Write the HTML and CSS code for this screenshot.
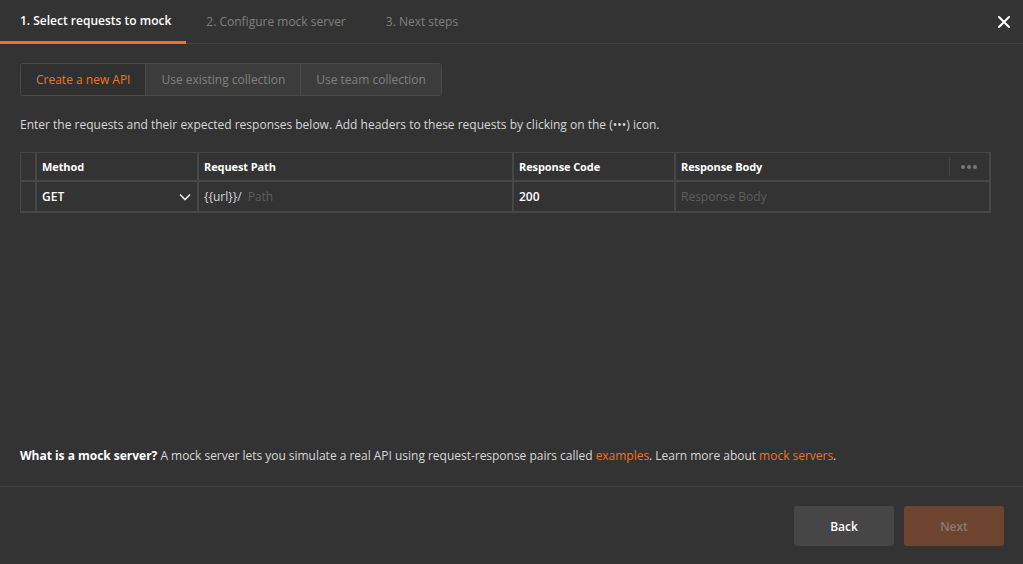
FILE: index.html
```html
<!DOCTYPE html>
<html>
<head>
<meta charset="utf-8">
<link rel="stylesheet" href="styles.css">
</head>
<body>
<div class="modal">
  <div class="tabs">
    <div class="tab active">1. Select requests to mock</div>
    <div class="tab">2. Configure mock server</div>
    <div class="tab">3. Next steps</div>
    <div class="close">
      <svg width="12" height="12" viewBox="0 0 12 12"><path d="M1 1 L11 11 M11 1 L1 11" stroke="#fff" stroke-width="2" stroke-linecap="square"/></svg>
    </div>
  </div>
  <div class="content">
    <div class="segmented">
      <div class="seg seg-active">Create a new API</div>
      <div class="seg">Use existing collection</div>
      <div class="seg">Use team collection</div>
    </div>
    <p class="desc">Enter the requests and their expected responses below. Add headers to these requests by clicking on the (&bull;&bull;&bull;) icon.</p>
    <div class="table">
      <div class="row head">
        <div class="cell c0"></div>
        <div class="cell c1">Method</div>
        <div class="cell c2">Request Path</div>
        <div class="cell c3">Response Code</div>
        <div class="cell c4">Response Body</div>
        <div class="cell c5"><span class="dots"><i></i><i></i><i></i></span></div>
      </div>
      <div class="row body">
        <div class="cell c0"></div>
        <div class="cell c1 method">GET
          <svg class="chev" width="12" height="8" viewBox="0 0 12 8"><path d="M1 1.5 L6 6.5 L11 1.5" stroke="#e6e6e6" stroke-width="1.6" fill="none"/></svg>
        </div>
        <div class="cell c2"><span class="url">{{url}}/</span><span class="ph">Path</span></div>
        <div class="cell c3 code">200</div>
        <div class="cell c4 ph">Response Body</div>
        <div class="cell c5 noborder"></div>
      </div>
    </div>
    <div class="spacer"></div>
    <p class="info"><b>What is a mock server?</b> A mock server lets you simulate a real API using request-response pairs called <a>examples</a>. Learn more about <a>mock servers</a>.</p>
  </div>
  <div class="footer">
    <button class="btn back">Back</button>
    <button class="btn next">Next</button>
  </div>
</div>
</body>
</html>
```
FILE: styles.css
```css
* { box-sizing: border-box; }
html, body { margin: 0; padding: 0; }
body {
  background: #333333;
  font-family: "Open Sans", "Noto Sans", sans-serif;
  color: #d4d4d4;
  width: 1023px;
  height: 564px;
  overflow: hidden;
}
.modal { display: flex; flex-direction: column; height: 564px; }
.tabs {
  display: flex;
  align-items: stretch;
  height: 44px;
  border-bottom: 1px solid #444444;
}
.tab {
  font-size: 12px;
  color: #808080;
  padding: 0 20px;
  display: flex;
  align-items: center;
  height: 43px;
}
.tab.active {
  color: #ffffff;
  font-weight: 600;
  border-bottom: 3px solid #f47023;
  padding-right: 15px;
  height: 44px;
  margin-bottom: -1px;
}
.close {
  margin-left: auto;
  width: 38px;
  display: flex;
  align-items: center;
  justify-content: center;
}
.content {
  flex: 1;
  padding: 19px 20px 0 20px;
  display: flex;
  flex-direction: column;
  border-bottom: 1px solid #444444;
}
.segmented {
  display: flex;
  align-self: flex-start;
  border: 1px solid #4a4a4a;
  border-radius: 3px;
  overflow: hidden;
  height: 33px;
}
.seg {
  font-size: 12px;
  color: #808080;
  background: #3c3c3c;
  padding: 0 15px;
  display: flex;
  align-items: center;
  border-left: 1px solid #4a4a4a;
}
.seg.seg-active {
  background: #303030;
  color: #f47023;
  border-left: none;
}
.desc {
  margin: 21px 0 0 0;
  font-size: 12px;
  color: #d8d8d8;
  line-height: 16px;
}
.table {
  margin-top: 19px;
  width: 971px;
  border: 1px solid #474747;
  border-bottom-width: 2px;
  border-right-width: 2px;
}
.row { display: flex; }
.row.head { height: 29px; border-bottom: 2px solid #474747; }
.row.body { height: 29px; }
.cell {
  display: flex;
  align-items: center;
  padding: 0 5px;
  font-size: 11px;
  border-right: 2px solid #474747;
}
.head .cell { color: #ffffff; font-weight: 700; letter-spacing: -0.1px; }
.c0 { width: 16px; padding: 0; }
.c1 { width: 162px; }
.c2 { width: 315px; }
.c3 { width: 162px; }
.c4 { width: 273px; }
.c5 { flex: 1; border-right: none; justify-content: center; }
.head .c4 { border-right: none; }
.head .c5 { position: relative; }
.head .c5::before {
  content: "";
  position: absolute;
  left: 0;
  top: 4px;
  bottom: 4px;
  width: 1px;
  background: #474747;
}
.dots { display: flex; gap: 2px; }
.dots i { width: 4px; height: 4px; border-radius: 50%; background: #7a7a7a; display: block; }
.body .cell { font-size: 12px; }
.method { color: #ffffff; font-weight: 600; justify-content: space-between; padding-right: 6px; }
.code { color: #ffffff; font-weight: 600; }
.url { color: #d8d8d8; margin-right: 6px; }
.ph { color: #5e5e5e; }
.body .c4 { border-right: none; }
.spacer { flex: 1; }
.info {
  margin: 0 0 22px 0;
  font-size: 12px;
  color: #d8d8d8;
  line-height: 16px;
  letter-spacing: -0.02px;
}
.info b { color: #ffffff; font-weight: 700; }
.info a { color: #f47023; }
.footer {
  height: 77px;
  display: flex;
  justify-content: flex-end;
  align-items: flex-start;
  gap: 10px;
  padding: 19px 19px 0 0;
}
.btn {
  width: 100px;
  height: 40px;
  border: none;
  border-radius: 3px;
  font-family: "Open Sans", "Noto Sans", sans-serif;
  font-size: 12px;
  font-weight: 600;
}
.back { background: #464646; color: #ffffff; }
.next { background: #6d4430; color: #8a7a70; }
```
